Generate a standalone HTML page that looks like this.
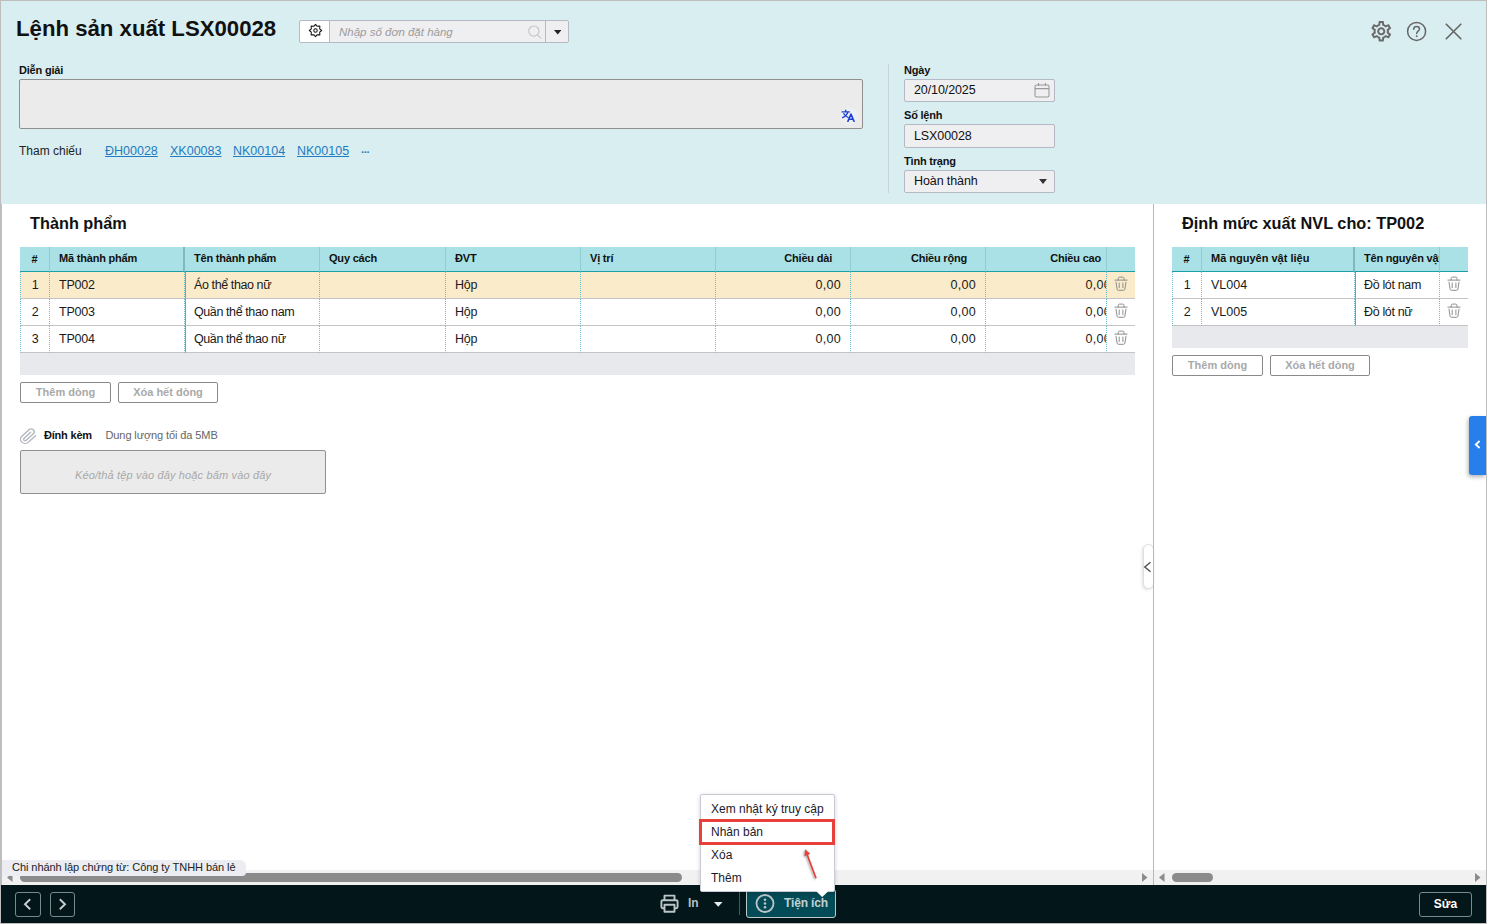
<!DOCTYPE html>
<html lang="vi">
<head>
<meta charset="utf-8">
<title>Lệnh sản xuất LSX00028</title>
<style>
*{box-sizing:border-box;margin:0;padding:0}
html,body{width:1487px;height:924px;overflow:hidden;background:#fff}
body{font-family:"Liberation Sans",sans-serif;font-size:13px;color:#111;position:relative}
.abs{position:absolute}
#frame{position:absolute;left:0;top:0;width:1487px;height:924px;border:1px solid #bdbdbd;border-bottom-width:1.300px;pointer-events:none;z-index:50}
#lb{position:absolute;left:1px;top:204px;width:1px;height:681px;background:#c0c0c0;z-index:51}
#hdr{position:absolute;left:0;top:0;width:1487px;height:204px;background:#d9eef1}
#title{position:absolute;left:16px;top:15px;font-size:22.2px;font-weight:bold;line-height:28px;color:#111;white-space:nowrap}
.lbl{position:absolute;font-size:11px;font-weight:bold;color:#111;line-height:13px;white-space:nowrap;letter-spacing:-0.200px}
.inp{position:absolute;border:1px solid #b5b9c3;background:#efeff1;border-radius:2px;font-size:12.5px;letter-spacing:-0.1px;line-height:21px;padding-left:9px;color:#111;white-space:nowrap}
a.ref{position:absolute;top:144px;font-size:12.5px;line-height:15px;color:#1f7cc0;text-decoration:underline;white-space:nowrap}
#body{position:absolute;left:2px;top:204px;width:1483px;height:681px;background:#fff}
.h2{position:absolute;font-size:16.3px;font-weight:bold;line-height:20px;color:#111;white-space:nowrap}
table.g{position:absolute;border-collapse:separate;border-spacing:0;table-layout:fixed;font-size:12.5px;letter-spacing:-0.25px}
table.g th{background:#a9e1e6;height:25px;font-size:11px;letter-spacing:-0.2px;font-weight:bold;text-align:left;padding:0 9px;border-bottom:1px solid #1a9fa7;border-right:1px solid #8fcdd2;white-space:nowrap;overflow:hidden;color:#111;line-height:21px;padding-bottom:2px}
table.g th.r,table.g td.r{text-align:right}
table.g td.r{letter-spacing:0.300px}
table.g th.r{padding-right:18px}
table.g td{height:27px;padding:0 9px;border-bottom:1px solid #c4c4c4;border-right:1px dotted #6dbccd;white-space:nowrap;overflow:hidden;color:#1a1a1a;line-height:25px;background:#fff}
table.g tr.sel td{background:#faecca}
table.g .c{text-align:center;padding:0}
table.g td:first-child{border-left:1px dotted #6dbccd}
table.g .fzh{border-right:2px solid #7fb9be}
table.g td.fz{border-left:1px solid #4fb0c0;letter-spacing:-0.4px;padding-left:8px}
table.g .act{padding:0;text-align:center;border-right:none}
table.g td.act{vertical-align:top}
table.g td.act svg{display:block;margin:4.200px 0 0 6.500px}
table.g td.last{padding-right:0}
table.g td.last span{display:inline-block;margin-right:-5px}
table.g th.last{padding-right:5px}
table.g .clip{padding-right:0}
.btn{position:absolute;height:21px;border:1px solid #8a8a8a;border-radius:2px;background:#fff;color:#a9a9a9;font-size:11px;font-weight:bold;text-align:center;line-height:19px;white-space:nowrap}
#bar{position:absolute;left:0;top:885px;width:1487px;height:38px;background:#03161a}
.nb{width:26px;height:25px;border:1px solid #788a8c;border-radius:3px}
</style>
</head>
<body>
<div id="hdr">
  <div id="title">Lệnh sản xuất LSX00028</div>
  <!-- search combo -->
  <div class="abs" id="combo" style="left:299px;top:20px;width:270px;height:23px;border:1px solid #b5b9c3;border-radius:2px;background:#efeff1">
    <div class="abs" style="left:0;top:0;width:30px;height:21px;background:#fff;border-right:1px solid #b5b9c3;border-radius:2px 0 0 2px">
      <svg class="abs" style="left:8px;top:2px" width="15" height="15" viewBox="0 0 15 15" fill="none" stroke="#151515" stroke-width="1.050" stroke-linejoin="round"><path d="M7.50 1.30 L9.22 3.34 L11.88 3.12 L11.66 5.78 L13.70 7.50 L11.66 9.22 L11.88 11.88 L9.22 11.66 L7.50 13.70 L5.78 11.66 L3.12 11.88 L3.34 9.22 L1.30 7.50 L3.34 5.78 L3.12 3.12 L5.78 3.34Z"/><circle cx="7.500" cy="7.500" r="1.700"/></svg>
    </div>
    <div class="abs" style="left:39px;top:0;font-size:11.5px;line-height:22px;font-style:italic;color:#9b9b9b;white-space:nowrap">Nhập số đơn đặt hàng</div>
    <svg class="abs" style="left:227px;top:3px" width="15.500" height="15.500" viewBox="0 0 17 17" fill="none" stroke="#c4c4c4" stroke-width="1.2"><circle cx="7.5" cy="7.8" r="5.6"/><path d="M11.8 12.2l3.4 3.4" stroke-linecap="round"/></svg>
    <div class="abs" style="left:245px;top:0;width:1px;height:21px;background:#b5b9c3"></div>
    <svg class="abs" style="left:253.500px;top:8.500px" width="7.500" height="5" viewBox="0 0 9 6"><path d="M0 0h9L4.5 5.500z" fill="#222"/></svg>
  </div>
  <!-- top-right icons -->
  <svg class="abs" style="left:1369.300px;top:19.300px" width="24.500" height="24.500" viewBox="0 0 24 24"><path fill="#6a6a6a" d="M19.43 12.98c.04-.32.07-.64.07-.98 0-.34-.03-.66-.07-.98l2.110-1.650c.19-.15.24-.42.12-.64l-2-3.460c-.09-.16-.26-.25-.44-.25-.06 0-.12.010-.17.030l-2.490 1c-.52-.4-1.080-.73-1.690-.98l-.38-2.650C14.460 2.180 14.250 2 14 2h-4c-.25 0-.46.180-.49.420l-.38 2.650c-.61.250-1.170.590-1.690.980l-2.490-1c-.06-.02-.12-.03-.18-.03-.17 0-.34.090-.43.250l-2 3.460c-.13.220-.07.490.12.640l2.110 1.650c-.04.320-.07.650-.07.980 0 .330.030.660.070.980l-2.110 1.650c-.19.150-.24.420-.12.640l2 3.460c.09.160.26.250.44.250.06 0 .12-.01.17-.03l2.490-1c.52.400 1.080.730 1.690.980l.38 2.650c.03.240.24.420.49.420h4c.25 0 .46-.18.490-.42l.38-2.650c.61-.25 1.170-.59 1.690-.98l2.490 1c.06.020.12.030.18.030.17 0 .34-.09.43-.25l2-3.460c.12-.22.07-.49-.12-.64l-2.110-1.650zm-1.980-1.710c.04.310.05.520.05.730 0 .210-.02.430-.05.730l-.14 1.130.89.700 1.080.840-.7 1.210-1.270-.51-1.040-.42-.9.680c-.43.320-.84.560-1.250.730l-1.060.43-.16 1.130-.2 1.350h-1.400l-.19-1.350-.16-1.130-1.060-.43c-.43-.18-.83-.41-1.230-.71l-.91-.7-1.060.43-1.270.51-.7-1.210 1.080-.84.890-.7-.14-1.130c-.03-.31-.05-.54-.05-.74s.02-.43.05-.73l.14-1.130-.89-.7-1.080-.84.7-1.210 1.270.51 1.040.42.900-.68c.43-.32.840-.56 1.250-.73l1.060-.43.160-1.130.2-1.350h1.390l.19 1.350.16 1.130 1.060.43c.43.180.83.410 1.230.71l.91.700 1.060-.43 1.270-.51.700 1.210-1.070.85-.89.700.14 1.130zM12 8c-2.210 0-4 1.790-4 4s1.790 4 4 4 4-1.790 4-4-1.790-4-4-4zm0 6c-1.100 0-2-.9-2-2s.9-2 2-2 2 .9 2 2-.9 2-2 2z"/></svg>
  <svg class="abs" style="left:1406px;top:21px" width="21" height="21" viewBox="0 0 21 21" fill="none" stroke="#666" stroke-width="1.5"><circle cx="10.6" cy="10.4" r="9"/><path d="M7.7 8.2c0-1.7 1.3-2.8 2.9-2.8s2.9 1 2.9 2.6c0 2-2.8 2.3-2.8 4.4" stroke-linecap="round"/><circle cx="10.7" cy="15.2" r=".6" fill="#666" stroke-width=".8"/></svg>
  <svg class="abs" style="left:1444px;top:22px" width="19" height="19" viewBox="0 0 19 19" stroke="#666" stroke-width="1.600" stroke-linecap="butt"><path d="M1.800 1.800l15.500 15.400M17.300 1.800L1.800 17.200"/></svg>

  <div class="lbl" style="left:19px;top:64px">Diễn giải</div>
  <div class="abs" style="left:19px;top:79px;width:844px;height:50px;background:#ebebeb;border:1px solid #8f8f8f;border-radius:2px"></div>
  <!-- translate icon -->
  <div class="abs" style="left:840px;top:107px;width:18px;height:18px;border-radius:9px;background:#edeff3"></div><svg class="abs" style="left:841.300px;top:108.600px" width="14.500" height="13.600" viewBox="0 0 16 15" fill="none" stroke="#1c3fd6" stroke-width="1.500" stroke-linecap="round" stroke-linejoin="round"><path d="M1.200 3.200h8M5.200 1.400v1.800M7.600 3.200c-.6 2.600-2.600 4.900-5.800 6.300M3.200 5.200c.9 1.800 2.600 3.300 4.600 4.100"/><path d="M7.600 13.600l3.400-8 3.400 8M8.800 11.200h4.400" stroke-width="1.700"/></svg>
  <div class="abs" style="left:19px;top:144px;font-size:12px;line-height:15px;color:#222;white-space:nowrap">Tham chiếu</div>
  <a class="ref" style="left:105px">ĐH00028</a>
  <a class="ref" style="left:170px">XK00083</a>
  <a class="ref" style="left:233px">NK00104</a>
  <a class="ref" style="left:297px">NK00105</a>
  <div class="abs" style="left:361px;top:142px;font-size:11px;line-height:15px;color:#1f7cc0;font-weight:bold;letter-spacing:-0.300px">...</div>

  <div class="abs" style="left:888px;top:64px;width:1px;height:129px;background:#c5d6d9"></div>
  <div class="lbl" style="left:904px;top:64px">Ngày</div>
  <div class="inp" style="left:904px;top:79px;width:151px;height:23px">20/10/2025</div>
  <svg class="abs" style="left:1034px;top:82px" width="16" height="16" viewBox="0 0 16 16" fill="none" stroke="#9a9a9a" stroke-width="1.1"><rect x="1" y="3" width="14" height="12" rx="1.5"/><path d="M1 6.6h14M4.6 1v3M11.4 1v3"/></svg>
  <div class="lbl" style="left:904px;top:109px">Số lệnh</div>
  <div class="inp" style="left:904px;top:124px;width:151px;height:24px;line-height:22px">LSX00028</div>
  <div class="lbl" style="left:904px;top:155px">Tình trạng</div>
  <div class="inp" style="left:904px;top:170px;width:151px;height:23px">Hoàn thành</div>
  <svg class="abs" style="left:1039px;top:179px" width="8" height="5" viewBox="0 0 8 5"><path d="M0 0h8L4 5z" fill="#333"/></svg>
</div>
<div id="body">
  <div class="h2" style="left:28px;top:9px">Thành phẩm</div>
  <table class="g" id="t1" style="left:18px;top:43px;width:1115px">
    <colgroup><col style="width:30px"><col style="width:135px"><col style="width:135px"><col style="width:126px"><col style="width:135px"><col style="width:135px"><col style="width:135px"><col style="width:135px"><col style="width:121px"><col style="width:28px"></colgroup>
    <tr><th class="c">#</th><th class="fzh">Mã thành phẩm</th><th>Tên thành phẩm</th><th>Quy cách</th><th>ĐVT</th><th>Vị trí</th><th class="r">Chiều dài</th><th class="r">Chiều rộng</th><th class="r last"><span>Chiều cao</span></th><th class="act"></th></tr>
    <tr class="sel"><td class="c">1</td><td>TP002</td><td class="fz">Áo thể thao nữ</td><td></td><td>Hộp</td><td></td><td class="r">0,00</td><td class="r">0,00</td><td class="r last"><span>0,00</span></td><td class="act"><svg class="tr" width="14" height="15.500" viewBox="0 0 14 15.500" fill="none" stroke="#8e8e8e" stroke-width="1" stroke-linecap="round" stroke-linejoin="round"><path d="M0.900 4.100H13.100M4.200 4.100V2.300c0-.7.500-1.200 1.200-1.200h3.400c.7 0 1.200.5 1.200 1.200V4.100M2 6.200l1.100 6.900c.1.700.6 1.200 1.300 1.200h5.200c.7 0 1.200-.5 1.300-1.200l1.100-6.900M5.200 7v4.700M8.900 7v4.700"/></svg></td></tr>
    <tr><td class="c">2</td><td>TP003</td><td class="fz">Quần thể thao nam</td><td></td><td>Hộp</td><td></td><td class="r">0,00</td><td class="r">0,00</td><td class="r last"><span>0,00</span></td><td class="act"><svg class="tr" width="14" height="15.500" viewBox="0 0 14 15.500" fill="none" stroke="#8e8e8e" stroke-width="1" stroke-linecap="round" stroke-linejoin="round"><path d="M0.900 4.100H13.100M4.200 4.100V2.300c0-.7.500-1.200 1.200-1.200h3.400c.7 0 1.200.5 1.200 1.200V4.100M2 6.200l1.100 6.900c.1.700.6 1.200 1.300 1.200h5.200c.7 0 1.200-.5 1.300-1.200l1.100-6.900M5.200 7v4.700M8.900 7v4.700"/></svg></td></tr>
    <tr><td class="c">3</td><td>TP004</td><td class="fz">Quần thể thao nữ</td><td></td><td>Hộp</td><td></td><td class="r">0,00</td><td class="r">0,00</td><td class="r last"><span>0,00</span></td><td class="act"><svg class="tr" width="14" height="15.500" viewBox="0 0 14 15.500" fill="none" stroke="#8e8e8e" stroke-width="1" stroke-linecap="round" stroke-linejoin="round"><path d="M0.900 4.100H13.100M4.200 4.100V2.300c0-.7.500-1.200 1.200-1.200h3.400c.7 0 1.200.5 1.200 1.200V4.100M2 6.200l1.100 6.900c.1.700.6 1.200 1.300 1.200h5.200c.7 0 1.200-.5 1.300-1.200l1.100-6.900M5.200 7v4.700M8.900 7v4.700"/></svg></td></tr>
  </table>
  <div class="abs" style="left:18px;top:149px;width:1115px;height:22px;background:#e8e9ed"></div>
  <div class="btn" style="left:18px;top:178px;width:91px">Thêm dòng</div>
  <div class="btn" style="left:116px;top:178px;width:100px">Xóa hết dòng</div>

  <svg class="abs" id="clip" style="left:17px;top:224.300px" width="18.500" height="16.800" viewBox="0 0 24 24" preserveAspectRatio="none" fill="none" stroke="#b3b7c0" stroke-width="1.800" stroke-linecap="round" stroke-linejoin="round"><path d="M21.440 11.050l-9.190 9.190a6 6 0 0 1-8.490-8.490l9.190-9.190a4 4 0 0 1 5.660 5.660l-9.200 9.190a2 2 0 0 1-2.830-2.830l8.490-8.480"/></svg>
  <div class="abs" style="left:42px;top:225px;font-size:11px;font-weight:bold;line-height:13px;color:#111;white-space:nowrap;letter-spacing:-0.200px">Đính kèm</div>
  <div class="abs" style="left:103.500px;top:225px;font-size:11px;line-height:13px;color:#666;white-space:nowrap;letter-spacing:-0.100px">Dung lượng tối đa 5MB</div>
  <div class="abs" style="left:18px;top:246px;width:306px;height:44px;background:#ebebeb;border:1px solid #8f8f8f;border-radius:2px;text-align:center;font-size:11px;font-style:italic;color:#a8a8a8;line-height:48px;white-space:nowrap;letter-spacing:0.150px">Kéo/thả tệp vào đây hoặc bấm vào đây</div>

  <!-- splitter -->
  <div class="abs" style="left:1140.700px;top:340px;width:11.300px;height:45px;background:#fff;border:1px solid #dcdfe7;border-radius:6px;box-shadow:-1px 1px 3px rgba(0,0,0,.12)"></div>
  <div class="abs" style="left:1151px;top:0;width:1px;height:681px;background:#b8b8b8"></div>
  <svg class="abs" style="left:1141px;top:356.500px" width="9" height="12" viewBox="0 0 9 12" fill="none" stroke="#555" stroke-width="1.500"><path d="M7.500 1.200L1.800 6l5.700 4.800"/></svg>

  <!-- right panel -->
  <div class="h2" style="left:1180px;top:9px">Định mức xuất NVL cho: TP002</div>
  <table class="g" id="t2" style="left:1170px;top:43px;width:296px">
    <colgroup><col style="width:30px"><col style="width:153px"><col style="width:85px"><col style="width:28px"></colgroup>
    <tr><th class="c">#</th><th class="fzh" style="letter-spacing:0">Mã nguyên vật liệu</th><th class="clip"><span>Tên nguyên vật liệu</span></th><th class="act"></th></tr>
    <tr><td class="c">1</td><td style="letter-spacing:0">VL004</td><td class="fz" style="letter-spacing:-0.350px">Đồ lót nam</td><td class="act"><svg class="tr" width="14" height="15.500" viewBox="0 0 14 15.500" fill="none" stroke="#8e8e8e" stroke-width="1" stroke-linecap="round" stroke-linejoin="round"><path d="M0.900 4.100H13.100M4.200 4.100V2.300c0-.7.500-1.200 1.200-1.200h3.400c.7 0 1.200.5 1.200 1.200V4.100M2 6.200l1.100 6.900c.1.700.6 1.200 1.300 1.200h5.200c.7 0 1.200-.5 1.300-1.200l1.100-6.900M5.200 7v4.700M8.900 7v4.700"/></svg></td></tr>
    <tr><td class="c">2</td><td style="letter-spacing:0">VL005</td><td class="fz" style="letter-spacing:-0.350px">Đồ lót nữ</td><td class="act"><svg class="tr" width="14" height="15.500" viewBox="0 0 14 15.500" fill="none" stroke="#8e8e8e" stroke-width="1" stroke-linecap="round" stroke-linejoin="round"><path d="M0.900 4.100H13.100M4.200 4.100V2.300c0-.7.500-1.200 1.200-1.200h3.400c.7 0 1.200.5 1.200 1.200V4.100M2 6.200l1.100 6.900c.1.700.6 1.200 1.300 1.200h5.200c.7 0 1.200-.5 1.300-1.200l1.100-6.900M5.200 7v4.700M8.900 7v4.700"/></svg></td></tr>
  </table>
  <div class="abs" style="left:1170px;top:122px;width:296px;height:22px;background:#e8e9ed"></div>
  <div class="btn" style="left:1170px;top:151px;width:91px">Thêm dòng</div>
  <div class="btn" style="left:1268px;top:151px;width:100px">Xóa hết dòng</div>

  <!-- blue tab -->
  <div class="abs" style="left:1467px;top:212px;width:17px;height:59px;background:#267fea;border-radius:3px 0 0 3px;box-shadow:-1px 2px 4px rgba(0,0,0,.3)"></div>
  <svg class="abs" style="left:1472px;top:236px" width="7" height="9" viewBox="0 0 7 9" fill="none" stroke="#fff" stroke-width="1.800"><path d="M5.600 1L1.800 4.500l3.800 3.500"/></svg>

  <!-- scrollbars -->
  <div class="abs" style="left:0;top:666px;width:1151px;height:15px;background:#f1f1f1"></div>
  <div class="abs" style="left:1152px;top:666px;width:1331px;height:15px;background:#f1f1f1"></div>
  <svg class="abs" style="left:5px;top:669px" width="6" height="9" viewBox="0 0 6 9"><path d="M5.500 0v9L0 4.500z" fill="#8b8b8b"/></svg>
  <div class="abs" style="left:18px;top:669px;width:661.500px;height:9px;border-radius:5px;background:#8b8b8b"></div>
  <svg class="abs" style="left:1140px;top:669px" width="6" height="9" viewBox="0 0 6 9"><path d="M0 0v9l5.500-4.500z" fill="#8b8b8b"/></svg>
  <svg class="abs" style="left:1157px;top:669px" width="6" height="9" viewBox="0 0 6 9"><path d="M5.500 0v9L0 4.500z" fill="#8b8b8b"/></svg>
  <div class="abs" style="left:1170px;top:669px;width:41px;height:9px;border-radius:5px;background:#8b8b8b"></div>
  <svg class="abs" style="left:1473px;top:669px" width="6" height="9" viewBox="0 0 6 9"><path d="M0 0v9l5.500-4.500z" fill="#8b8b8b"/></svg>
  <!-- branch tag -->
  <div class="abs" style="left:0;top:656px;width:244px;height:16px;background:#ebedf2;border-radius:0 6px 4px 0;font-size:11px;line-height:15px;padding-left:10px;color:#222;white-space:nowrap;letter-spacing:-0.060px">Chi nhánh lập chứng từ: Công ty TNHH bán lẻ</div>
</div>
<div id="bar">
  <div class="abs nb" style="left:15px;top:7px"></div>
  <svg class="abs" style="left:23px;top:13px" width="9" height="13" viewBox="0 0 9 13" fill="none" stroke="#c9cdd4" stroke-width="1.900"><path d="M7.200 1.200L2 6.200l5.200 5"/></svg>
  <div class="abs nb" style="left:50px;top:7px;width:25px"></div>
  <svg class="abs" style="left:58px;top:13px" width="9" height="13" viewBox="0 0 9 13" fill="none" stroke="#c9cdd4" stroke-width="1.900"><path d="M1.800 1.200L7 6.200l-5.200 5"/></svg>
  <!-- print -->
  <svg class="abs" style="left:660px;top:9px" width="19" height="19" viewBox="0 0 19 19" fill="none" stroke="#bcc5c7" stroke-width="1.900" stroke-linejoin="round"><path d="M4.500 6.200V1.600h10v4.600"/><path d="M4.500 14.200H2.800c-.8 0-1.400-.6-1.400-1.400V7.600c0-.8.600-1.400 1.400-1.400h13.400c.8 0 1.400.6 1.400 1.400v5.200c0 .8-.6 1.400-1.400 1.400h-1.700"/><rect x="4.500" y="10.800" width="10" height="7"/></svg>
  <div class="abs" style="left:688px;top:11px;font-size:12px;font-weight:bold;line-height:14px;color:#b4bfc1">In</div>
  <svg class="abs" style="left:714px;top:17px" width="9" height="5" viewBox="0 0 9 5"><path d="M0 0h8.500L4.250 4.800z" fill="#e8eeee"/></svg>
  <div class="abs" style="left:739px;top:6px;width:1px;height:24px;background:#4d5557"></div>
  <div class="abs" style="left:746px;top:4px;width:90px;height:29px;background:#034b56;border:1px solid #bcc8ca;border-radius:3px"></div>
  <svg class="abs" style="left:755px;top:9px" width="20" height="20" viewBox="0 0 20 20" fill="none" stroke="#bcc5c7" stroke-width="1.800"><circle cx="10" cy="9.500" r="8.500"/><g fill="#bcc5c7" stroke="none"><circle cx="10" cy="5.700" r="1.300"/><circle cx="10" cy="9.500" r="1.300"/><circle cx="10" cy="13.300" r="1.300"/></g></svg>
  <div class="abs" style="left:784px;top:11px;font-size:12px;font-weight:bold;line-height:14px;color:#c3cfd1;letter-spacing:-0.15px;white-space:nowrap">Tiện ích</div>
  <div class="abs" style="left:1419px;top:7px;width:53px;height:25px;border:1px solid #788a8c;border-radius:3px;text-align:center;font-size:12px;font-weight:bold;line-height:23px;color:#fff">Sửa</div>
</div>
<!-- popup menu -->
<div class="abs" id="pop" style="left:700px;top:794px;width:135px;height:98px;background:#fff;border:1px solid #c6cbd4;border-radius:2px;box-shadow:0 1px 4px rgba(0,0,0,.18);font-size:12px;color:#1a1a2a;z-index:20">
  <div class="abs" style="left:10px;top:7px;line-height:14px;white-space:nowrap">Xem nhật ký truy cập</div>
  <div class="abs" style="left:10px;top:30px;line-height:14px;white-space:nowrap">Nhân bản</div>
  <div class="abs" style="left:10px;top:53px;line-height:14px;white-space:nowrap">Xóa</div>
  <div class="abs" style="left:10px;top:76px;line-height:14px;white-space:nowrap">Thêm</div>
</div>
<svg class="abs" style="left:815.700px;top:891px;z-index:21" width="12.400" height="6.300" viewBox="0 0 12.400 6.300"><path d="M0 0h12.400L6.200 6.100z" fill="#fff"/></svg>
<div class="abs" style="left:699px;top:819px;width:136px;height:26px;border:3px solid #e8413b;z-index:22"></div>
<svg class="abs" style="left:798px;top:846px;z-index:23;filter:drop-shadow(-1px 1.500px 1.300px rgba(0,0,0,.38));overflow:visible" width="26" height="36" viewBox="0 0 26 36" fill="none"><path d="M18 32.300L9 8.200" stroke="#e8413b" stroke-width="1.800"/><path d="M7.300 3.700l4.600 4-5 2z" fill="#e8413b" stroke="#e8413b" stroke-width=".600" stroke-linejoin="round"/></svg>
<div id="frame"></div><div id="lb"></div>
</body>
</html>
